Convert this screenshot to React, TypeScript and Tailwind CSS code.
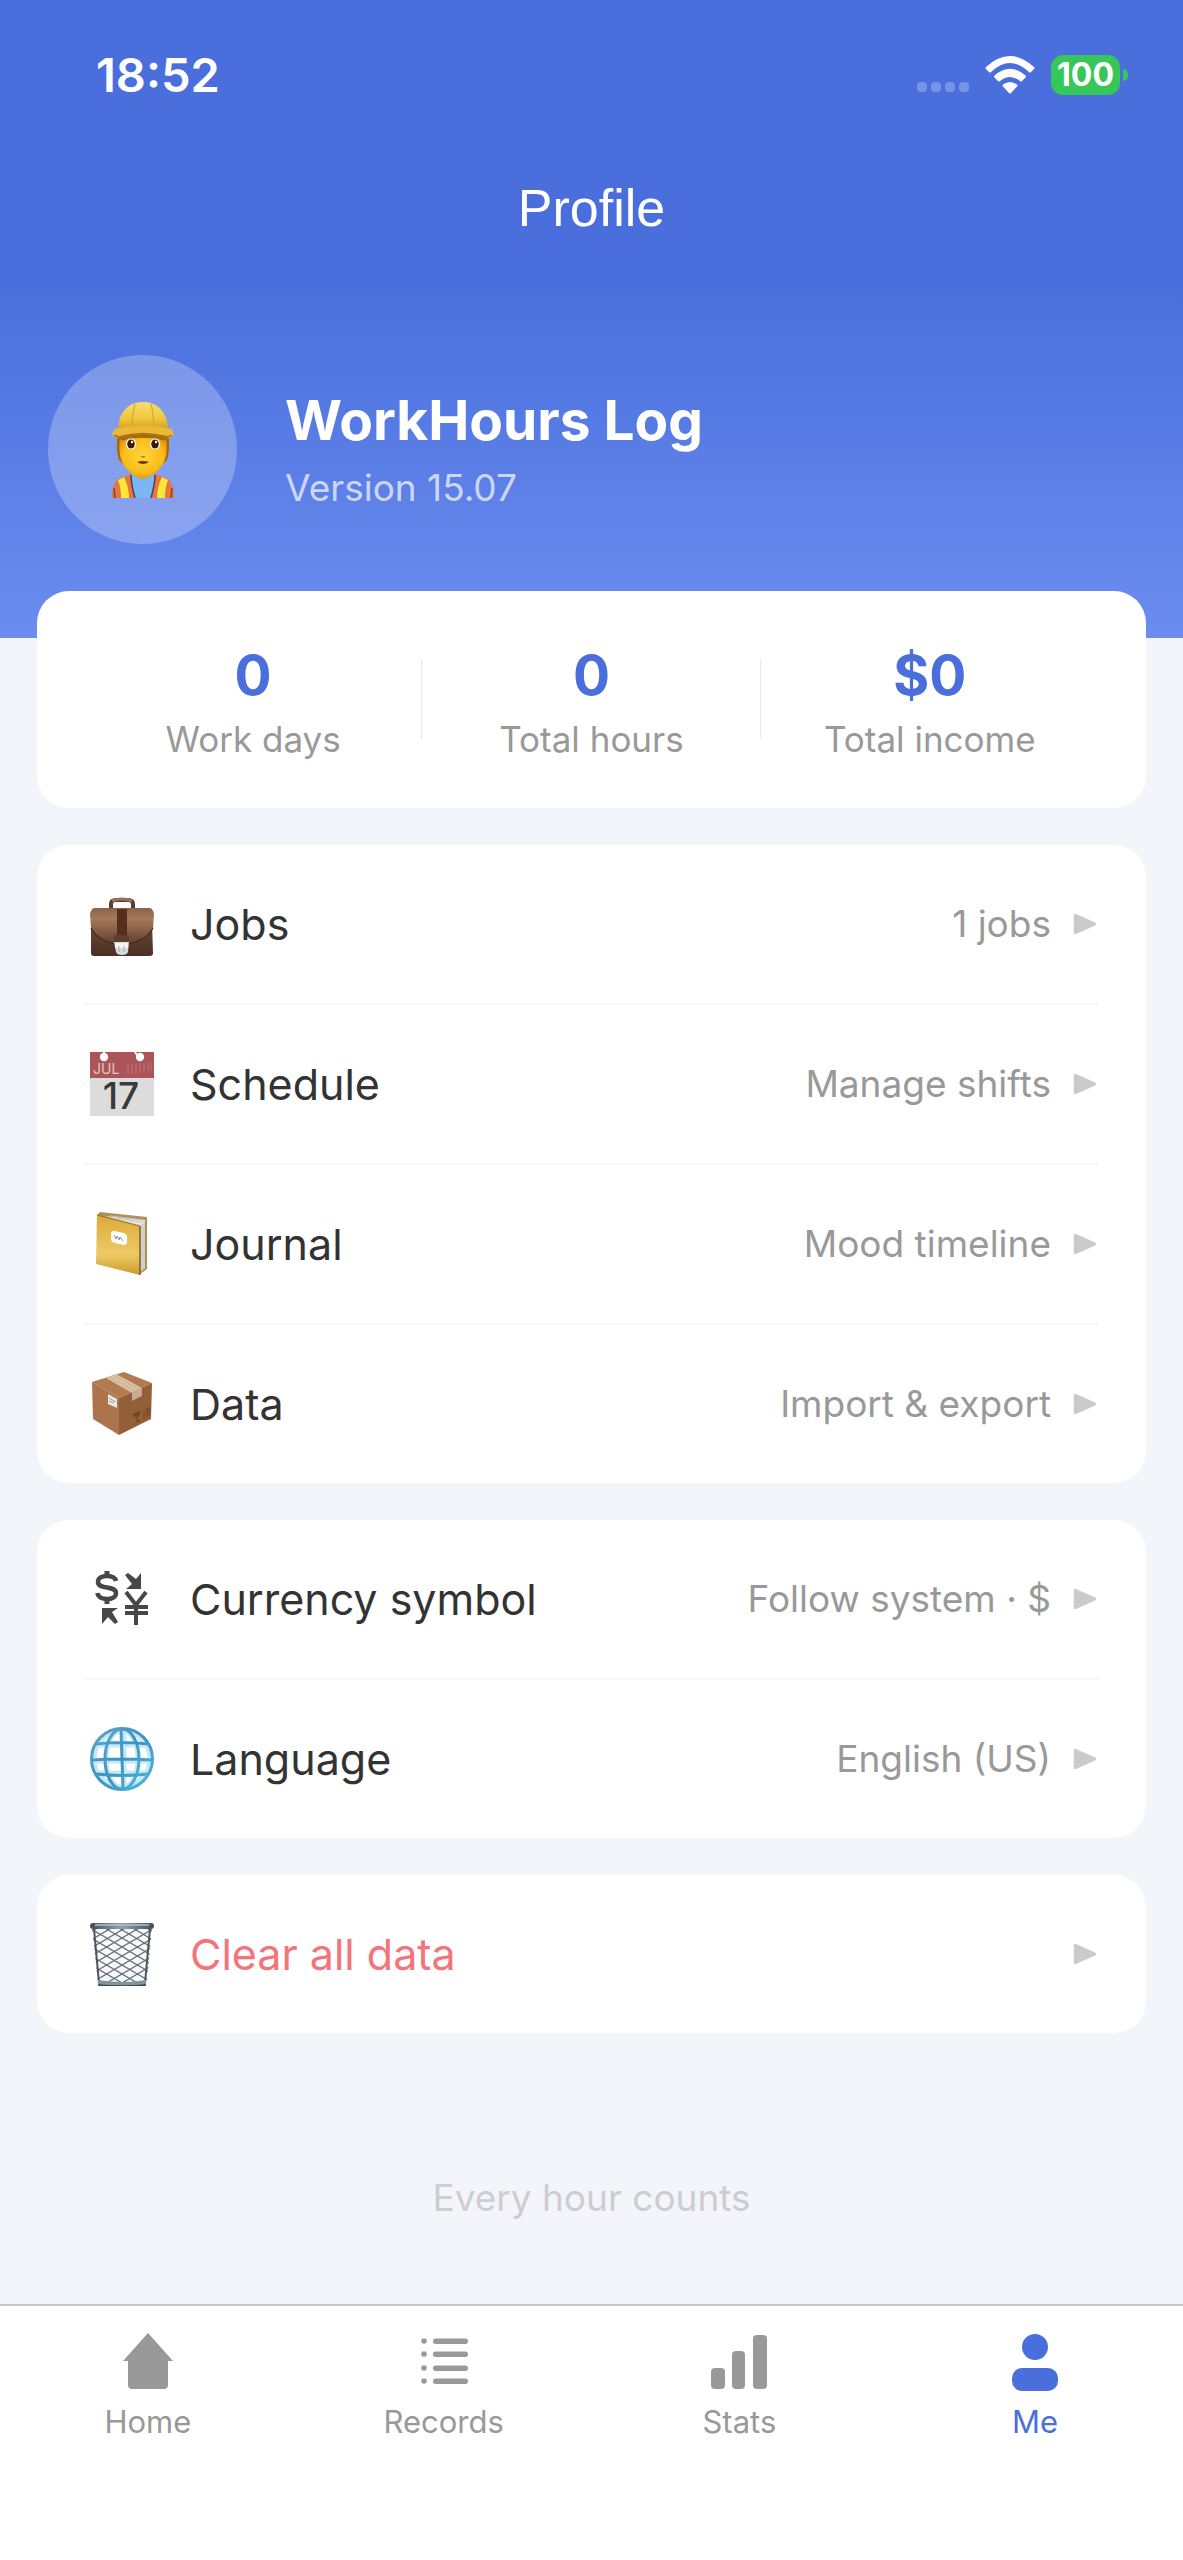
import React from 'react';

interface MenuItem {
  id: string;
  label: string;
  value?: string;
  icon: React.FC;
  danger?: boolean;
}

const Worker: React.FC = () => (
  <svg viewBox="0 0 64 96" className="w-16 h-24" aria-hidden="true">
    <defs>
      <linearGradient id="helmet" x1="0" y1="0" x2="0" y2="1">
        <stop offset="0" stopColor="#f8dc6e" />
        <stop offset="0.6" stopColor="#f0c63c" />
        <stop offset="1" stopColor="#d39a20" />
      </linearGradient>
      <radialGradient id="face" cx="0.5" cy="0.45" r="0.6">
        <stop offset="0" stopColor="#ffd83a" />
        <stop offset="0.7" stopColor="#fbbc18" />
        <stop offset="1" stopColor="#e38f10" />
      </radialGradient>
    </defs>
    {/* Vest and shirt */}
    <path d="M1 96c0-12 3-19 11-21l9-3h22l9 3c8 2 11 9 11 21z" fill="#e9743c" />
    <path d="M21 71h22c1 9-1 17-3 25H24c-2-8-4-16-3-25z" fill="#79b8f3" />
    <path d="M23 64h18v8c-3 6-15 6-18 0z" fill="#e39a16" />
    <path d="M7 78l6-3c3 6 5 13 5 21h-8c0-7-1-13-3-18zM57 78l-6-3c-3 6-5 13-5 21h8c0-7 1-13 3-18z" fill="#fbe83a" />
    <path d="M20 73c0 8 2 16 4 23M44 73c0 8-2 16-4 23" stroke="#4d4350" strokeWidth="1.5" fill="none" />
    <path d="M3 86l1 10M61 86l-1 10" stroke="#6b4a4a" strokeWidth="1.5" fill="none" />
    {/* Head */}
    <path d="M7 32h50c2 10 1 20-1 26l-4 4H12l-4-4C6 52 5 42 7 32z" fill="#a3690f" />
    <path d="M9 36h46c1 10 1 16-2 24-3 7-13 16-21 16S14 67 11 60c-3-8-3-14-2-24z" fill="url(#face)" />
    <path d="M8 34h48c0 4-4 6-8 3-8-2-24-2-32 0-4 3-8 1-8-3z" fill="#a76a16" />
    <ellipse cx="20" cy="42" rx="5" ry="5.500" fill="#fff" />
    <ellipse cx="44" cy="42" rx="5" ry="5.500" fill="#fff" />
    <ellipse cx="20" cy="42" rx="3.800" ry="4.600" fill="#3b1c0c" />
    <ellipse cx="44" cy="42" rx="3.800" ry="4.600" fill="#3b1c0c" />
    <circle cx="21" cy="40" r="1.200" fill="#fff" />
    <circle cx="45" cy="40" r="1.200" fill="#fff" />
    <path d="M30 54q2 2 4 0" stroke="#cf7a12" strokeWidth="1.500" fill="none" />
    <path d="M26 60q6-2 12 0q-6 4-12 0z" fill="#7b2c12" />
    {/* Helmet */}
    <path d="M7 28C7 10 18 0 32 0s25 10 25 28z" fill="url(#helmet)" />
    <path d="M24 2c-2 8-3 17-3 26M40 2c2 8 3 17 3 26" stroke="#d9a926" strokeWidth="1.200" fill="none" />
    <path d="M3 27q29-7 58 0l2 6q-4 4-8 2-23-6-46 0-4 2-8-2z" fill="#e8ba36" />
    <path d="M3 33q5 3 8 1 21-5 42 0 4 2 8-1" stroke="#a97414" strokeWidth="1.500" fill="none" />
  </svg>
);

const Briefcase: React.FC = () => (
  <svg viewBox="0 0 64 64" className="w-16 h-16" aria-hidden="true">
    <defs>
      <linearGradient id="case" x1="0" y1="0" x2="0" y2="1">
        <stop offset="0" stopColor="#6d4a37" />
        <stop offset="1" stopColor="#4b2f23" />
      </linearGradient>
      <linearGradient id="flap" x1="0" y1="0" x2="0" y2="1">
        <stop offset="0" stopColor="#8a6249" />
        <stop offset="0.3" stopColor="#a5795a" />
        <stop offset="1" stopColor="#5f3f2e" />
      </linearGradient>
    </defs>
    <path d="M21 17v-5c0-3 2-4 5-4h12c3 0 5 1 5 4v5" fill="none" stroke="#5c3c2d" strokeWidth="4" />
    <path d="M22 9q10-4 20 0" fill="none" stroke="#9b7058" strokeWidth="3" />
    <path d="M1 30h61l1 31q0 3-3 3H4q-3 0-3-3z" fill="url(#case)" />
    <path d="M4 16h56q3 1 4 6l-1 14c-5 10-17 16-31 16S5 46 1 36L0 22q1-5 4-6z" fill="url(#flap)" />
    <path d="M1 36c5 10 17 16 31 16s26-6 31-16" fill="none" stroke="#432a1f" strokeWidth="1.200" />
    <path d="M27 17h10v26H27z" fill="#54301f" />
    <path d="M24 43h15v7H24z" fill="#5f3e2f" />
    <path d="M24 50h15l-1 10q-1 3-6 3t-6-3z" fill="#d9d9db" />
    <path d="M25 51h13v5H25z" fill="#f4f4f5" />
    <path d="M29 54v6M34 54v6" stroke="#a7a7aa" />
  </svg>
);

const Calendar: React.FC = () => (
  <svg viewBox="0 0 64 64" className="w-16 h-16 overflow-visible" aria-hidden="true">
    <path d="M0 0h64v64H0z" fill="#dcdcdd" />
    <path d="M0 0h64v26H0z" fill="#ab5558" />
    <path d="M38 12v10M42 12v10M46 12v10M50 11v9M54 11v9M58 11v8M61 11v8" stroke="#be7779" strokeWidth="1" />
    <circle cx="14" cy="5" r="4.200" fill="#fff" />
    <circle cx="50" cy="5" r="4.200" fill="#fff" />
    <path d="M13 0h2v5h-2zM44 0h2l4 5h-3z" fill="#fff" />
    <text x="3" y="22" fontSize="14" fill="#e3c5c6" fontFamily="Inter, sans-serif">JUL</text>
    <text x="31" y="57" fontSize="37" fontWeight="500" textAnchor="middle" fill="#3a3a3a" fontFamily="Inter, sans-serif">17</text>
  </svg>
);

const Notebook: React.FC = () => (
  <svg viewBox="0 0 64 64" className="w-16 h-16" aria-hidden="true">
    <defs>
      <linearGradient id="cover" x1="0" y1="0" x2="0" y2="1">
        <stop offset="0" stopColor="#dba936" />
        <stop offset="0.65" stopColor="#edcb66" />
        <stop offset="1" stopColor="#cf9a2b" />
      </linearGradient>
    </defs>
    <path d="M7 3l3-3 47 5v52l-7 5V13z" fill="#ae9254" />
    <path d="M14 4l41 4v48l-5 4V13z" fill="#e9e7e6" />
    <path d="M52 12v47M54 10v47" stroke="#b9b5b5" />
    <path d="M20 4l34 4M26 6l26 4" stroke="#c5c0b8" />
    <path d="M7 3l43 11v49L6 52z" fill="url(#cover)" />
    <path d="M50 14v49" stroke="#7d5a20" strokeWidth="1.500" />
    <path d="M7 3l43 11" stroke="#8d6b2c" />
    <path d="M24 19l10 2q3 1 3 4v5q0 3-3 3l-9-2q-4-1-4-4v-5q0-3 3-3z" fill="#fff" />
    <path d="M24 23l2 4 1-3 2 4 1-3 3 4" stroke="#8b8fb5" fill="none" />
  </svg>
);

const Parcel: React.FC = () => (
  <svg viewBox="0 0 64 64" className="w-16 h-16" aria-hidden="true">
    <path d="M2 10L34 0l28 11-33 15z" fill="#b3794f" />
    <path d="M2 10l27 16v37L3 47z" fill="#ad744c" />
    <path d="M29 26l33-15-1 36-32 16z" fill="#935f38" />
    <path d="M16 6l10-4 26 14-10 5z" fill="#dac0a5" />
    <path d="M42 21l10-5v8l-10 5z" fill="#c7ab91" />
    <path d="M19 5l26 14M23 3l26 14" stroke="#c6a98d" strokeWidth="0.800" />
    <path d="M18 22l9 5v9l-9-4z" fill="#e9e9ea" />
    <path d="M19 26l7 4M19 29l5 2" stroke="#8ea0b8" strokeWidth="1" />
    <path d="M43 42l7-3q0 5-3 6v5l3-1M47 45q-4 0-4-3" stroke="#754624" strokeWidth="1" fill="#754624" />
    <path d="M54 38v9M57 36v9M59 35v9" stroke="#7c4b28" strokeWidth="1.500" />
  </svg>
);

const CurrencyExchange: React.FC = () => (
  <svg viewBox="0 0 64 64" className="w-16 h-16" aria-hidden="true" fill="#474747">
    <path
      d="M26 14C25 10 22 9 17 9S8 11 8 15c0 8 18 3 18 11 0 4-4 6-9 6S8 30 7.500 26"
      fill="none"
      stroke="#474747"
      strokeWidth="4.500"
    />
    <path d="M14.500 4h5v5h-5zM14.500 32h5v5h-5z" />
    <path d="M51 6v16H36l6-5-7-9 3-2 8 6z" />
    <path d="M12 41h16l-6 4 6 10-3 2-7-7-6 7z" />
    <path d="M36 25l10 13 10-13M46 37v21M35 40h23M35 46h23" fill="none" stroke="#474747" strokeWidth="4" />
  </svg>
);

const Globe: React.FC = () => (
  <svg viewBox="0 0 64 64" className="w-16 h-16" aria-hidden="true">
    <defs>
      <linearGradient id="globe" x1="0" y1="0" x2="1" y2="1">
        <stop offset="0" stopColor="#5aa6cc" />
        <stop offset="0.5" stopColor="#3d93c4" />
        <stop offset="1" stopColor="#4fb9da" />
      </linearGradient>
    </defs>
    <g fill="none" stroke="#c4e9f5" strokeWidth="5">
      <circle cx="32" cy="32" r="28" fill="#fff" />
      <path d="M34 3v58M4 34h56M8 18h48M8 46h48" />
      <ellipse cx="32" cy="32" rx="16" ry="29" />
    </g>
    <g fill="none" stroke="url(#globe)" strokeWidth="3">
      <circle cx="32" cy="32" r="30.500" />
      <ellipse cx="32" cy="32" rx="17" ry="30" />
      <path d="M6 17q26-3 52 0M2 33q30-2 60 0M6 47q26 3 52 0M31 2l2 60" />
    </g>
  </svg>
);

const Wastebasket: React.FC = () => (
  <svg viewBox="0 0 64 64" className="w-16 h-16" aria-hidden="true">
    <defs>
      <clipPath id="basket">
        <path d="M2 6h60l-5 55H8z" />
      </clipPath>
      <linearGradient id="rim" x1="0" y1="0" x2="1" y2="0">
        <stop offset="0" stopColor="#454c52" />
        <stop offset="0.5" stopColor="#8fa3b0" />
        <stop offset="1" stopColor="#454c52" />
      </linearGradient>
    </defs>
    <path d="M3 6h58l-5 55H8z" fill="#f7f8f9" />
    <g clipPath="url(#basket)" fill="none" stroke="#68727a" strokeWidth="1.300">
      <path d="M-4 4l72 42M-4 13l72 42M-4 22l72 42M-4 31l72 42M-4 40l72 42M8 2l60 35M22 2l46 27M36 2l32 19M50 2l18 11" />
      <path d="M68 4L-4 46M68 13L-4 55M68 22L-4 64M68 31L-4 73M68 40L-4 82M56 2L-4 37M42 2L-4 29M28 2L-4 21M14 2L-4 13" />
    </g>
    <path d="M4 7l5 54M60 7l-5 54" stroke="#4d565c" strokeWidth="2" />
    <path d="M8 58q24 4 48 0v5q-24 2-48 0z" fill="#8094a0" />
    <path d="M8 63q24 2 48 0" stroke="#3f474c" strokeWidth="1.500" fill="none" />
    <rect x="0" y="1" width="64" height="6" rx="3" fill="url(#rim)" />
    <path d="M5 3h54" stroke="#a9c3d0" strokeWidth="1.500" />
  </svg>
);

const Arrow: React.FC = () => (
  <svg viewBox="0 0 24 24" className="w-6 h-6 shrink-0" aria-hidden="true">
    <path d="M2 3L22 12L2 21z" fill="#cbcbcb" stroke="#cbcbcb" strokeWidth="2.500" strokeLinejoin="round" />
  </svg>
);

const HomeIcon: React.FC = () => (
  <svg viewBox="0 0 64 64" className="w-16 h-16" fill="currentColor" aria-hidden="true">
    <path d="M32 3l25 28h-5v24q0 4-4 4H16q-4 0-4-4V31H7z" />
  </svg>
);

const RecordsIcon: React.FC = () => (
  <svg viewBox="0 0 64 64" className="w-16 h-16" fill="currentColor" aria-hidden="true">
    {[11, 24, 38, 51].map((y) => (
      <g key={y}>
        <circle cx="12" cy={y} r="2.800" />
        <rect x="21" y={y - 2.5} width="35" height="5.500" rx="2.700" />
      </g>
    ))}
  </svg>
);

const StatsIcon: React.FC = () => (
  <svg viewBox="0 0 64 64" className="w-16 h-16" fill="currentColor" aria-hidden="true">
    <rect x="4" y="38" width="14" height="21" rx="4" />
    <rect x="25" y="21" width="13" height="38" rx="4" />
    <rect x="46" y="5" width="14" height="54" rx="4" />
  </svg>
);

const MeIcon: React.FC = () => (
  <svg viewBox="0 0 64 64" className="w-16 h-16" fill="currentColor" aria-hidden="true">
    <circle cx="32" cy="17" r="13" />
    <rect x="9" y="38" width="46" height="23" rx="10" />
  </svg>
);

const stats = [
  { label: 'Work days', value: '0' },
  { label: 'Total hours', value: '0' },
  { label: 'Total income', value: '$0' }
];

const menuGroups: MenuItem[][] = [
  [
    { id: 'jobs', label: 'Jobs', value: '1 jobs', icon: Briefcase },
    { id: 'schedule', label: 'Schedule', value: 'Manage shifts', icon: Calendar },
    { id: 'journal', label: 'Journal', value: 'Mood timeline', icon: Notebook },
    { id: 'data', label: 'Data', value: 'Import & export', icon: Parcel }
  ],
  [
    { id: 'currency', label: 'Currency symbol', value: 'Follow system · $', icon: CurrencyExchange },
    { id: 'language', label: 'Language', value: 'English (US)', icon: Globe }
  ],
  [{ id: 'clear', label: 'Clear all data', icon: Wastebasket, danger: true }]
];

const tabs = [
  { id: 'home', label: 'Home', icon: HomeIcon },
  { id: 'records', label: 'Records', icon: RecordsIcon },
  { id: 'stats', label: 'Stats', icon: StatsIcon },
  { id: 'me', label: 'Me', icon: MeIcon }
];

const StatusBar: React.FC = () => (
  <div className="flex items-center justify-between pl-24 pr-[55px]">
    <span className="text-[47px] leading-[64px] font-semibold">18:52</span>
    <div className="flex items-center">
      <div className="flex gap-1 pt-6 mr-4" aria-hidden="true">
        {[0, 1, 2, 3].map((dot) => (
          <span key={dot} className="w-[10px] h-[10px] rounded-[4px] bg-white/25" />
        ))}
      </div>
      <svg viewBox="0 0 50 38" className="w-[50px] h-[38px] mr-4" fill="#fff" aria-hidden="true">
        <path d="M1 11Q25-11 49 11q1 1 0 2l-3 3q-1 1-2 0Q25-2 6 16q-1 1-2 0l-3-3q-1-1 0-2z" />
        <path d="M9.500 19.500Q25 6 40.500 19.500q1 1 0 2l-3.500 3.500q-1 1-2 0-10-8-20 0-1 1-2 0l-3.500-3.500q-1-1 0-2z" />
        <path d="M18 28.500q7-5 14 0 1 1 0 2l-6 6.500q-1 1-2 0l-6-6.500q-1-1 0-2z" />
      </svg>
      <span className="flex h-10 w-[69px] items-center justify-center rounded-[12px] bg-[#35c759] text-[32px] leading-10 font-bold">
        100
      </span>
      <span className="ml-[3px] h-3 w-[5px] rounded-r-full bg-[#35c759]" />
    </div>
  </div>
);

export default function App() {
  return (
    <div className="flex min-h-screen flex-col bg-[#f4f5fa] font-['Inter',sans-serif]">
      <header className="text-white">
        <div className="bg-[#4a6fdc] pt-[43px] pb-[43px]">
          <StatusBar />
          <h1 className="mt-[69px] text-center font-['Liberation_Sans',sans-serif] text-[52px] leading-[64px]">Profile</h1>
        </div>

        {/* Account summary */}
        <div className="flex items-center gap-12 bg-linear-to-b from-[#4a6fdc] to-[#6b8df0] px-12 pt-[72px] pb-[94px]">
          <div className="flex h-[189px] w-[189px] items-center justify-center rounded-full bg-white/25">
            <Worker />
          </div>
          <div className="pt-1">
            <h2 className="text-[55px] leading-[72px] font-bold">WorkHours Log</h2>
            <p className="text-[37px] leading-[64px] text-white/70">Version 15.07</p>
          </div>
        </div>
      </header>

      <main className="flex flex-1 flex-col gap-[37px] px-[37px]">
        <section className="relative -mt-[47px] grid grid-cols-3 rounded-[32px] bg-white px-[47px] pt-12 pb-[41px]">
          {stats.map((stat, index) => (
            <div key={stat.label} className="relative text-center">
              <p className="text-[55px] leading-[72px] font-bold text-[#4a6fdc]">{stat.value}</p>
              <p className="text-[35px] leading-[56px] text-[#999999]">{stat.label}</p>
              {index < stats.length - 1 && <span className="absolute top-5 right-0 h-20 w-px bg-[#e8e8ea]" />}
            </div>
          ))}
        </section>

        {menuGroups.map((group) => (
          <section key={group[0].id} className="divide-y-2 divide-[#f7f7f9] rounded-[32px] bg-white px-[47px]">
            {group.map((item) => (
              <button key={item.id} type="button" className="flex w-full items-center py-[47px] pl-1.5 pr-0.5 text-left">
                <item.icon />
                <span className={`ml-9 flex-1 text-[43px] leading-[64px] ${item.danger ? 'text-[#f5737a]' : 'text-[#333333]'}`}>
                  {item.label}
                </span>
                {item.value && <span className="mr-[22px] text-[37px] leading-[64px] text-[#999999]">{item.value}</span>}
                <Arrow />
              </button>
            ))}
          </section>
        ))}

        <p className="mt-[104px] mb-12 text-center text-[37px] leading-[48px] text-[#cccdd2]">Every hour counts</p>
      </main>

      <nav className="grid grid-cols-4 border-t-2 border-[#c8c8ca] bg-white pt-6 pb-[118px]">
        {tabs.map((tab) => (
          <a
            key={tab.id}
            href={`#${tab.id}`}
            className={`flex flex-col items-center gap-2 text-[31px] leading-10 ${tab.id === 'me' ? 'text-[#4a6fdc]' : 'text-[#999999]'}`}
          >
            <tab.icon />
            {tab.label}
          </a>
        ))}
      </nav>
    </div>
  );
}
